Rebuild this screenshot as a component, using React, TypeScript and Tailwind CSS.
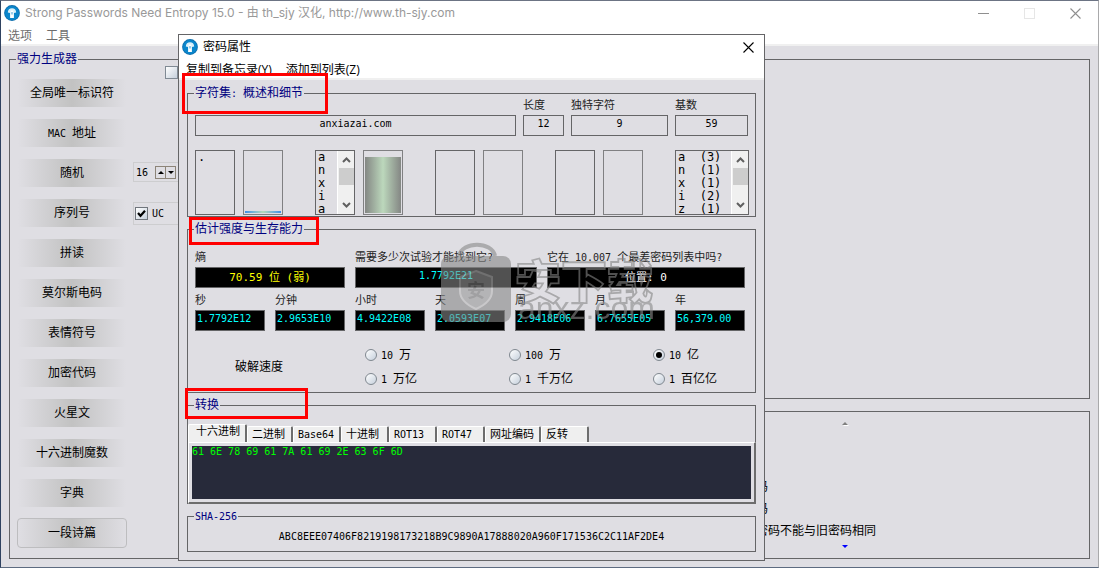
import { useState } from "react";
import type { ReactNode } from "react";

// ─── Data ────────────────────────────────────────────────────────────────────

const GENERATORS = [
  "全局唯一标识符",
  "MAC 地址",
  "随机",
  "序列号",
  "拼读",
  "莫尔斯电码",
  "表情符号",
  "加密代码",
  "火星文",
  "十六进制魔数",
  "字典",
  "一段诗篇",
];

const TIMES = [
  { label: "秒", value: "1.7792E12" },
  { label: "分钟", value: "2.9653E10" },
  { label: "小时", value: "4.9422E08" },
  { label: "天", value: "2.0593E07" },
  { label: "周", value: "2.9418E06" },
  { label: "月", value: "6.7655E05" },
  { label: "年", value: "56,379.00" },
];

const SPEEDS = ["10 万", "100 万", "10 亿", "1 万亿", "1 千万亿", "1 百亿亿"];

const TABS = [
  { name: "十六进制", width: "w-[59px]" },
  { name: "二进制", width: "w-[46px]" },
  { name: "Base64", width: "w-12" },
  { name: "十进制", width: "w-12" },
  { name: "ROT13", width: "w-12" },
  { name: "ROT47", width: "w-12" },
  { name: "网址编码", width: "w-14" },
  { name: "反转", width: "w-12" },
];

const COUNTS = ["a  (3)", "n  (1)", "x  (1)", "i  (2)", "z  (1)"];

// ─── Small parts ─────────────────────────────────────────────────────────────

// Latin runs are set smaller than the Chinese ones, so two letters fill one
// Chinese character cell.
function Mixed({ text }: { text: string }) {
  return (
    <>
      {text.split(/([\x20-\x7e]+)/).map((part, i) =>
        i % 2 ? (
          <span key={i} className="text-[10px] whitespace-pre">
            {part}
          </span>
        ) : (
          part
        )
      )}
    </>
  );
}

function AppIcon() {
  return (
    <svg viewBox="0 0 16 16" className="h-4 w-4 shrink-0" aria-hidden="true">
      <circle cx="8" cy="8" r="7.9" fill="#0d6fae" />
      <circle cx="8" cy="8" r="7" fill="#0a86cc" />
      <path d="M3.800 7.600C3.800 4.600 5.600 3.200 8 3.200s4.200 1.400 4.200 4.400L10 8v5H6V8z" fill="#d8eff9" />
      <path d="M6.700 5.500h2.600V13H6.700z" fill="#fff" />
      <path d="M7.600 7h.8v2.500h-.8z" fill="#0a86cc" />
    </svg>
  );
}

function CloseIcon() {
  return (
    <svg viewBox="0 0 11 11" className="h-[11px] w-[11px]" aria-hidden="true">
      <path d="M.5.5l10 10M10.500.5l-10 10" stroke="currentColor" strokeWidth="1.100" />
    </svg>
  );
}

function Triangle({ down = false }: { down?: boolean }) {
  return (
    <svg viewBox="0 0 6 3" className="block h-[3px] w-[6px]" aria-hidden="true">
      <path d={down ? "M0 0h6L3 3z" : "M0 3h6L3 0z"} fill="currentColor" />
    </svg>
  );
}

function Group({ title, className = "", children }: { title: string; className?: string; children: ReactNode }) {
  return (
    <fieldset className={`min-w-0 border border-[#656567] ${className}`}>
      <legend className="ml-[6px] px-px text-xs leading-3 text-[#000080]">
        <Mixed text={title} />
      </legend>
      {children}
    </fieldset>
  );
}

function Field({
  id,
  label,
  value,
  className,
  inputClass,
}: {
  id: string;
  label?: string;
  value: string;
  className: string;
  inputClass: string;
}) {
  return (
    <div className={`flex flex-col ${className}`}>
      {label && (
        <label htmlFor={id} className="mb-[3px] text-[11px] leading-3 whitespace-nowrap text-[#222]">
          <Mixed text={label} />
        </label>
      )}
      <input
        id={id}
        readOnly
        value={value}
        aria-label={label ? undefined : id}
        className={`block h-[21px] w-full border border-[#656567] pb-1 outline-none ${inputClass}`}
      />
    </div>
  );
}

function ScrollTrack() {
  return (
    <div className="flex w-[17px] shrink-0 flex-col items-center border-l border-white bg-[#f0f0f0] text-[#606060]">
      <svg viewBox="0 0 15 17" className="h-[17px] w-[15px]" aria-hidden="true">
        <path d="M4 11l3.500-3.500L11 11" fill="none" stroke="currentColor" strokeWidth="2" />
      </svg>
      <div className="h-[17px] w-[15px] bg-[#cdcdcd]" />
      <div className="flex-1" />
      <svg viewBox="0 0 15 17" className="h-[17px] w-[15px]" aria-hidden="true">
        <path d="M4 6l3.500 3.500L11 6" fill="none" stroke="currentColor" strokeWidth="2" />
      </svg>
    </div>
  );
}

function ListBox({ items, className, scroll = false }: { items: string[]; className: string; scroll?: boolean }) {
  return (
    <div className={`flex h-[65px] overflow-hidden border border-[#656567] ${className}`}>
      <ul className="flex-1 pl-[2px] text-xs leading-[13px] whitespace-pre">
        {items.map((item) => (
          <li key={item}>{item}</li>
        ))}
      </ul>
      {scroll && <ScrollTrack />}
    </div>
  );
}

function Meter({ children }: { children?: ReactNode }) {
  return <div className="flex h-[65px] w-10 flex-col justify-end border border-[#808082] p-px">{children}</div>;
}

// ─── Main window ─────────────────────────────────────────────────────────────

function GeneratorPanel() {
  return (
    <Group title="强力生成器" className="w-[579px] shrink-0">
      <div className="flex">
        <div className="flex flex-col gap-[10px] pt-[13px] pb-[10px] pl-[7px]">
          {GENERATORS.map((name) => (
            <button
              key={name}
              className="h-[30px] w-[110px] rounded border border-transparent bg-linear-to-r from-[#dfdee3] via-[#c2c2c2] to-[#dfdee3] bg-clip-padding text-xs last:border-[#bdbdbf]"
            >
              <Mixed text={name} />
            </button>
          ))}
        </div>
        <div className="ml-[6px] pt-px">
          <input
            type="checkbox"
            aria-label="全部"
            className="ml-8 block h-[13px] w-[13px] appearance-none border border-[#808a94] bg-linear-to-br from-white to-[#c6d0dc]"
          />
          <div className="mt-[83px] flex h-5 w-16 items-center border border-[#cdcdcf] pl-[2px]">
            <input aria-label="长度" defaultValue="16" className="w-[19px] text-[10px] outline-none" />
            <button aria-label="增加" className="flex h-[13px] w-[11px] items-center justify-center border border-[#8c8478]">
              <Triangle />
            </button>
            <button aria-label="减少" className="-ml-px flex h-[13px] w-[11px] items-center justify-center border border-[#8c8478]">
              <Triangle down />
            </button>
          </div>
          <label className="mt-5 flex h-[23px] w-16 items-center gap-1 border border-[#cdcdcf] pl-px text-[10px]">
            <span className="relative flex h-[13px] w-[13px]">
              <input
                type="checkbox"
                defaultChecked
                className="peer h-[13px] w-[13px] appearance-none border border-[#70757c] bg-linear-to-br from-white to-[#c6d0dc]"
              />
              <svg viewBox="0 0 13 13" className="pointer-events-none absolute inset-0 hidden peer-checked:block" aria-hidden="true">
                <path d="M3 6l2.500 2.800L10 3.800" fill="none" stroke="#000" strokeWidth="2.200" />
              </svg>
            </span>
            UC
          </label>
        </div>
      </div>
    </Group>
  );
}

function MainWindow() {
  return (
    <div className="flex min-h-screen flex-col border border-t-[#6c7484] border-r-[#a9a9ab] border-b-[#5d6b80] border-l-[#2f4260] bg-[#dfdee3]">
      <header className="border-b-2 border-[#f0f0f0] bg-white">
        <div className="flex h-6 items-center pl-[3px]">
          <AppIcon />
          <h1 className="ml-[5px] font-['Inter','Noto_Sans_CJK_SC',sans-serif] text-xs whitespace-nowrap text-[#999]">
            Strong Passwords Need Entropy 15.0 - 由 th_sjy 汉化, http://www.th-sjy.com
          </h1>
          <div className="ml-auto flex items-center gap-[35px] pr-[17px] text-[#8f8f8f]">
            <button aria-label="最小化" className="flex h-[11px] w-[11px] items-center">
              <span className="h-px w-full bg-current" />
            </button>
            <button aria-label="最大化" className="h-[11px] w-[11px] border border-[#e6e6e6]" />
            <button aria-label="关闭">
              <CloseIcon />
            </button>
          </div>
        </div>
        <nav className="flex h-[19px] items-center gap-[14px] pt-[2px] pl-[7px] text-xs text-[#6d6d6d]">
          <button>选项</button>
          <button>工具</button>
        </nav>
      </header>

      <main className="flex flex-1 gap-3 px-2 pt-[7px] pb-2">
        <GeneratorPanel />
        <div className="flex flex-1 flex-col gap-3 pt-[6px]">
          <section className="flex-1 border border-[#656567]" />
          <section className="flex flex-col border border-[#656567] pt-[10px] pb-[10px]">
            <button aria-label="上一条" className="self-center text-[#808080] drop-shadow-[1px_1px_0_#fff]">
              <Triangle />
            </button>
            <ul className="mt-[51px] pl-[155px] text-xs leading-[22px] whitespace-nowrap">
              <li>码</li>
              <li>码</li>
              <li>密码不能与旧密码相同</li>
            </ul>
            <button aria-label="下一条" className="mt-[3px] self-center text-[#0000ff]">
              <Triangle down />
            </button>
          </section>
        </div>
      </main>
    </div>
  );
}

// ─── Dialog ──────────────────────────────────────────────────────────────────

function CharsetGroup() {
  const box = "text-center text-[10px]";
  return (
    <Group title="字符集: 概述和细节">
      <div className="flex items-end gap-[7px] px-[7px]">
        <Field id="password" value="anxiazai.com" className="flex-1" inputClass={box} />
        <Field id="length" label="长度" value="12" className="w-[41px]" inputClass={box} />
        <Field id="unique" label="独特字符" value="9" className="w-[97px]" inputClass={box} />
        <Field id="base" label="基数" value="59" className="w-[73px]" inputClass={box} />
      </div>
      <div className="mt-[14px] flex gap-8 pb-px pl-[7px]">
        <div className="flex gap-2">
          <ListBox items={["."]} className="w-10" />
          <Meter>
            <div className="h-[2px] bg-linear-to-r from-[#3f8fe6] via-[#b5d9ba] to-[#3f8fe6]" />
          </Meter>
        </div>
        <div className="flex gap-2">
          <ListBox items={["a", "n", "x", "i", "a "]} className="w-10" scroll />
          <Meter>
            <div className="h-[56px] bg-linear-to-r from-[#848784] via-[#bcd8bc] to-[#848784]" />
          </Meter>
        </div>
        <div className="flex gap-2">
          <ListBox items={[]} className="w-10" />
          <Meter />
        </div>
        <div className="flex gap-2">
          <ListBox items={[]} className="w-10" />
          <Meter />
        </div>
        <ListBox items={COUNTS} className="w-[74px]" scroll />
      </div>
    </Group>
  );
}

function StrengthGroup() {
  const [speed, setSpeed] = useState("10 亿");
  return (
    <Group title="估计强度与生存能力">
      <div className="flex gap-[10px] pt-[17px] pr-[10px] pl-[7px]">
        <Field
          id="entropy"
          label="熵"
          value="70.59 位 (弱)"
          className="w-[150px]"
          inputClass="bg-black text-center text-[11px] text-[#ffff00]"
        />
        <Field
          id="trials"
          label="需要多少次试验才能找到它?"
          value="1.7792E21"
          className="w-[182px]"
          inputClass="bg-black text-center text-[10px] text-[#00ffff]"
        />
        <Field
          id="worst"
          label="它在 10.007 个最差密码列表中吗?"
          value="位置: 0"
          className="flex-1"
          inputClass="bg-black text-center text-[11px] text-white"
        />
      </div>
      <div className="mt-[7px] grid grid-cols-7 gap-[10px] pr-[10px] pl-[7px]">
        {TIMES.map((t) => (
          <Field
            key={t.label}
            id={t.label}
            label={t.label}
            value={t.value}
            className=""
            inputClass="bg-black pl-px text-[10px] text-[#00ffff]"
          />
        ))}
      </div>
      <div className="mt-3 flex items-center pb-px text-xs">
        <span className="w-[177px] pl-[47px]">破解速度</span>
        <div className="grid flex-1 grid-cols-[144px_144px_1fr]">
          {SPEEDS.map((s) => (
            <label key={s} className="flex h-6 items-center gap-1 whitespace-nowrap">
              <input
                type="radio"
                name="speed"
                checked={speed === s}
                onChange={() => setSpeed(s)}
                className="flex h-3 w-3 appearance-none items-center justify-center rounded-full border border-[#808890] bg-linear-to-br from-white to-[#c6d0dc] checked:before:h-[6px] checked:before:w-[6px] checked:before:rounded-full checked:before:bg-black checked:before:content-['']"
              />
              <span>
                <Mixed text={s} />
              </span>
            </label>
          ))}
        </div>
      </div>
    </Group>
  );
}

function ConvertGroup() {
  return (
    <Group title="转换" className="border-b-0">
      <div role="tablist" className="mt-[13px] flex h-[18px] items-end text-[11px] leading-3">
        {TABS.map((tab, i) => (
          <button
            key={tab.name}
            role="tab"
            aria-selected={i === 0}
            className={`${tab.width} h-4 rounded-t-xs border-t border-r-2 border-l border-t-white border-r-[#6d6d6d] border-l-white bg-[#efefef] pl-1 text-left whitespace-nowrap aria-selected:h-[18px] aria-selected:pb-1 aria-selected:pl-[7px]`}
          >
            <Mixed text={tab.name} />
          </button>
        ))}
      </div>
      <div className="-mr-px border-t border-r-2 border-b-2 border-l border-t-white border-r-[#6d6d6d] border-b-[#6d6d6d] border-l-white p-[3px]">
        <textarea
          readOnly
          aria-label="十六进制"
          value="61 6E 78 69 61 7A 61 69 2E 63 6F 6D"
          className="block h-[53px] w-full resize-none bg-[#272a3a] text-[10px] leading-3 text-[#00ff00] outline-none"
        />
      </div>
    </Group>
  );
}

function PropertiesDialog() {
  return (
    <div role="dialog" aria-labelledby="dialog-title" className="absolute top-[34px] left-[178px] w-[587px] border border-[#656567] bg-[#dfdee3]">
      <header className="border-b-2 border-[#f0f0f0] bg-white">
        <div className="flex h-6 items-center pr-[10px] pl-[3px]">
          <AppIcon />
          <h2 id="dialog-title" className="ml-[5px] text-xs">
            密码属性
          </h2>
          <button aria-label="关闭" className="ml-auto">
            <CloseIcon />
          </button>
        </div>
        <nav className="flex h-[19px] items-center gap-[14px] pt-[2px] pl-[7px] font-['Open_Sans','Noto_Sans_CJK_SC',sans-serif] text-xs">
          <button>复制到备忘录(Y)</button>
          <button>添加到列表(Z)</button>
        </nav>
      </header>
      <div className="flex flex-col gap-[6px] px-2 pt-[7px] pb-2">
        <CharsetGroup />
        <StrengthGroup />
        <ConvertGroup />
        <Group title="SHA-256">
          <p className="pt-[7px] pb-[7px] text-center text-[10px] leading-[14px]">
            ABC8EEE07406F8219198173218B9C9890A17888020A960F171536C2C11AF2DE4
          </p>
        </Group>
      </div>
    </div>
  );
}

// ─── Overlays: site watermark and red callout frames ─────────────────────────

function Watermark() {
  return (
    <svg
      viewBox="0 0 220 92"
      className="pointer-events-none absolute top-[240px] left-[440px] h-[92px] w-[220px] opacity-60"
      aria-hidden="true"
    >
      <path d="M19 16C22 1 52 1 55 16" fill="none" stroke="#8a8a8a" strokeWidth="4" />
      <rect x="1" y="16" width="70" height="66" rx="8" fill="#888" />
      <path d="M36 31l16 6v14c0 8-7 14-16 18-9-4-16-10-16-18V37z" fill="#999" stroke="#bbb" strokeWidth="2" />
      <text x="36" y="57" textAnchor="middle" fontSize="18" fontWeight="700" fill="#777">
        安
      </text>
      <text x="75" y="58" fontSize="46" fontWeight="900" fill="none" stroke="#858585" strokeWidth="1.800">
        安下载
      </text>
      <text x="78" y="79" fontSize="32" fill="#8a8a8a" className="font-['Liberation_Sans',sans-serif]">
        anxz.com
      </text>
    </svg>
  );
}

export default function App() {
  return (
    <div className="relative overflow-hidden font-['DejaVu_Sans_Mono','Noto_Sans_CJK_SC',monospace] text-black">
      <MainWindow />
      <PropertiesDialog />
      <Watermark />
      <div className="pointer-events-none absolute top-[73px] left-[182px] h-[41px] w-[146px] border-3 border-[#ff0000]" />
      <div className="pointer-events-none absolute top-[217px] left-[189px] h-[28px] w-[130px] border-3 border-[#ff0000]" />
      <div className="pointer-events-none absolute top-[388px] left-[185px] h-[31px] w-[123px] border-3 border-[#ff0000]" />
    </div>
  );
}
